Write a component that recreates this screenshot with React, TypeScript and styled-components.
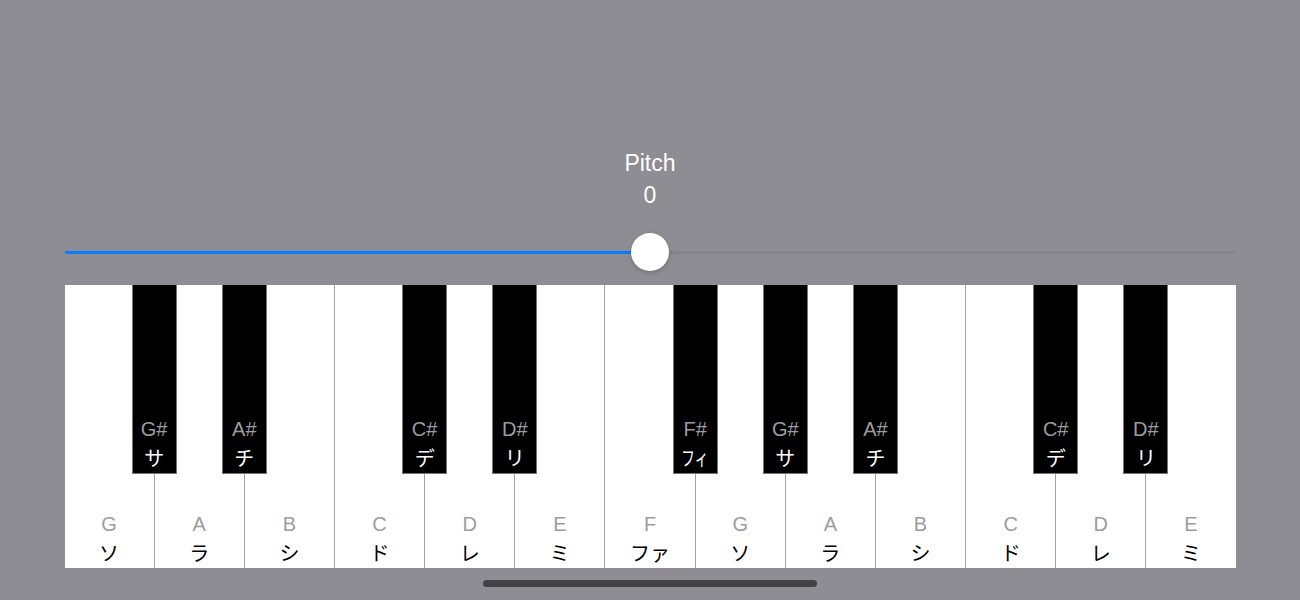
import React from "react";
import styled, { createGlobalStyle } from "styled-components";

const GlobalStyle = createGlobalStyle`
  html, body {
    margin: 0;
    padding: 0;
    background: #8e8d93;
  }
  body {
    font-family: "Liberation Sans", "Noto Sans CJK JP", sans-serif;
  }
`;

const Screen = styled.div`
  width: 1300px;
  height: 600px;
  background: #8e8d93;
  display: flex;
  flex-direction: column;
  align-items: center;
  padding-top: 147px;
  box-sizing: border-box;
`;

const Caption = styled.div`
  color: #ffffff;
  font-size: 23px;
  line-height: 32px;
  text-align: center;
`;

const SliderRow = styled.div`
  position: relative;
  width: 1171px;
  height: 40px;
  margin-top: 21px;
  display: flex;
  align-items: center;
`;

const Track = styled.div`
  width: 100%;
  height: 3px;
  border-radius: 2px;
  background: #85848a;
  overflow: hidden;
`;

const Fill = styled.div`
  height: 100%;
  background: #0a7aff;
`;

const Thumb = styled.div`
  position: absolute;
  top: 1px;
  width: 38px;
  height: 38px;
  margin-left: -19px;
  border-radius: 50%;
  background: #ffffff;
  box-shadow: 0 2px 5px rgba(0, 0, 0, 0.18), 0 0 1px rgba(0, 0, 0, 0.15);
`;

const Keyboard = styled.div`
  margin-top: 13px;
  width: 1171px;
  height: 283px;
  display: flex;
  background: #ffffff;
`;

const WhiteKey = styled.div<{ $last?: boolean }>`
  position: relative;
  flex: 1;
  background: #ffffff;
  border-right: ${(p) => (p.$last ? "none" : "1px solid #a4a4a8")};
  display: flex;
  flex-direction: column;
  justify-content: flex-end;
  align-items: center;
`;

const BlackKey = styled.div`
  position: absolute;
  top: 0;
  right: -23px;
  width: 45px;
  height: 189px;
  box-sizing: border-box;
  background: #000000;
  border: 1px solid #767676;
  border-top: none;
  z-index: 2;
  display: flex;
  flex-direction: column;
  justify-content: flex-end;
  align-items: center;
`;

const Letter = styled.div`
  color: #9c9ca0;
  font-size: 20px;
  line-height: 28px;
`;

const Kana = styled.div<{ $dark?: boolean; $squeeze?: boolean }>`
  color: ${(p) => (p.$dark ? "#ffffff" : "#000000")};
  font-size: 20px;
  line-height: 28px;
  margin-top: 2px;
  white-space: nowrap;
  transform: ${(p) => (p.$squeeze ? "scaleX(0.68)" : "none")};
`;

const HomeBar = styled.div`
  margin-top: 12px;
  width: 334px;
  height: 7px;
  border-radius: 4px;
  background: #414146;
`;

type Note = { name: string; kana: string; sharp?: { name: string; kana: string } };

const notes: Note[] = [
  { name: "G", kana: "ソ", sharp: { name: "G#", kana: "サ" } },
  { name: "A", kana: "ラ", sharp: { name: "A#", kana: "チ" } },
  { name: "B", kana: "シ" },
  { name: "C", kana: "ド", sharp: { name: "C#", kana: "デ" } },
  { name: "D", kana: "レ", sharp: { name: "D#", kana: "リ" } },
  { name: "E", kana: "ミ" },
  { name: "F", kana: "ファ", sharp: { name: "F#", kana: "フィ" } },
  { name: "G", kana: "ソ", sharp: { name: "G#", kana: "サ" } },
  { name: "A", kana: "ラ", sharp: { name: "A#", kana: "チ" } },
  { name: "B", kana: "シ" },
  { name: "C", kana: "ド", sharp: { name: "C#", kana: "デ" } },
  { name: "D", kana: "レ", sharp: { name: "D#", kana: "リ" } },
  { name: "E", kana: "ミ" },
];

export default function App() {
  const pitch = 0;
  const min = -12;
  const max = 12;
  const ratio = (pitch - min) / (max - min);

  return (
    <>
      <GlobalStyle />
      <Screen>
        <Caption>Pitch</Caption>
        <Caption>{pitch}</Caption>
        <SliderRow>
          <Track>
            <Fill style={{ width: `${ratio * 100}%` }} />
          </Track>
          <Thumb style={{ left: `${ratio * 100}%` }} />
        </SliderRow>
        <Keyboard>
          {notes.map((n, i) => (
            <WhiteKey key={i} $last={i === notes.length - 1}>
              <Letter>{n.name}</Letter>
              <Kana>{n.kana}</Kana>
              {n.sharp && (
                <BlackKey>
                  <Letter>{n.sharp.name}</Letter>
                  <Kana $dark $squeeze={n.sharp.kana.length > 1}>
                    {n.sharp.kana}
                  </Kana>
                </BlackKey>
              )}
            </WhiteKey>
          ))}
        </Keyboard>
        <HomeBar />
      </Screen>
    </>
  );
}
